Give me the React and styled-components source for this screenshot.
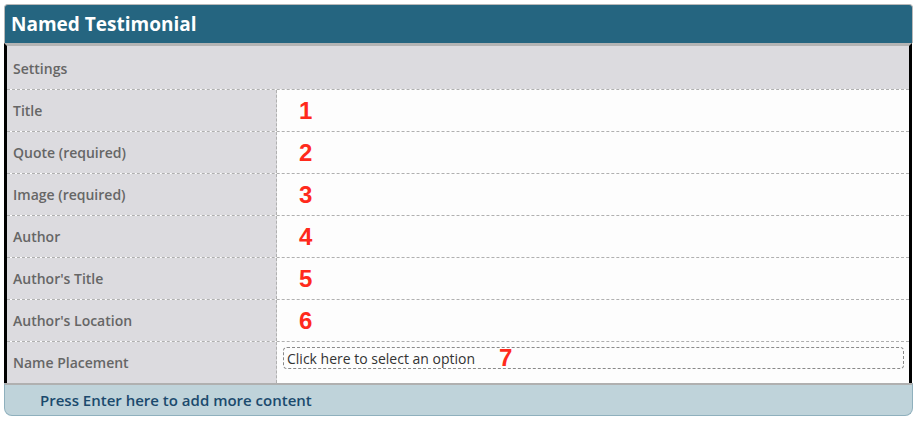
import styled, { createGlobalStyle } from "styled-components";

const GlobalStyle = createGlobalStyle`
  body {
    margin: 0;
    background: #ffffff;
    font-family: "Open Sans", "DejaVu Sans", sans-serif;
  }
`;

const Wrapper = styled.div`
  margin: 4px 0 0 4px;
  width: 909px;
`;

const Header = styled.div`
  height: 39px;
  box-sizing: border-box;
  background-color: #256580;
  border: 1px solid #b9b9b9;
  border-bottom: none;
  border-radius: 4px 4px 0 0;
  display: flex;
  align-items: center;
  padding-left: 6px;
  color: #ffffff;
  font-size: 19px;
  font-weight: 700;
`;

const Body = styled.div`
  border-top: 3px solid #b4b4b4;
  border-left: 3px solid #000;
  border-right: 3px solid #000;
  margin-right: 1px;
`;

const SettingsRow = styled.div`
  height: 43px;
  background-color: #dcdbdf;
  display: flex;
  align-items: center;
  padding: 2px 0 0 6px;
  box-sizing: border-box;
  color: #666;
  font-size: 14px;
  font-weight: 600;
`;

const Row = styled.div`
  height: 42px;
  box-sizing: border-box;
  border-top: 1px dashed #b0b0b0;
  display: grid;
  grid-template-columns: 270px 1fr;
`;

const Label = styled.div`
  background-color: #dcdbdf;
  border-right: 1px dashed #b0b0b0;
  display: flex;
  align-items: center;
  padding-left: 6px;
  color: #666;
  font-size: 14px;
  font-weight: 600;
`;

const Value = styled.div`
  background-color: #fdfdfd;
  display: flex;
  align-items: ${(p) => (p.top ? "flex-start" : "center")};
  padding: ${(p) => (p.top ? "5px" : "0")} 5px 0 6px;
`;

const Marker = styled.span`
  font-family: "Liberation Sans", Arial, sans-serif;
  font-weight: 700;
  font-size: 24px;
  color: #ff2a1c;
  margin-left: ${(p) => p.offset || 0}px;
  line-height: 1;
`;

const Select = styled.div`
  flex: 1;
  height: 22px;
  box-sizing: border-box;
  border: 1px dashed #8a8a8a;
  border-radius: 4px;
  display: flex;
  align-items: center;
  padding-left: 3px;
  color: #333;
  font-size: 14px;
`;

const Footer = styled.div`
  border-top: 2px solid #b0b0b0;
  height: 33px;
  box-sizing: border-box;
  background-color: #bfd3da;
  border-left: 1px solid #8fb0bd;
  border-right: 1px solid #8fb0bd;
  border-bottom: 1px solid #8fb0bd;
  border-radius: 0 0 8px 8px;
  display: flex;
  align-items: center;
  padding-left: 35px;
  color: #1b4a6d;
  font-size: 15px;
  font-weight: 600;
`;

const fields = [
  "Title",
  "Quote (required)",
  "Image (required)",
  "Author",
  "Author's Title",
  "Author's Location",
];

export default function App() {
  return (
    <>
      <GlobalStyle />
      <Wrapper>
        <Header>Named Testimonial</Header>
        <Body>
          <SettingsRow>Settings</SettingsRow>
          {fields.map((label, i) => (
            <Row key={label}>
              <Label>{label}</Label>
              <Value>
                <Marker offset={16}>{i + 1}</Marker>
              </Value>
            </Row>
          ))}
          <Row>
            <Label>Name Placement</Label>
            <Value top>
              <Select>
                Click here to select an option
                <Marker offset={24}>7</Marker>
              </Select>
            </Value>
          </Row>
        </Body>
        <Footer>Press Enter here to add more content</Footer>
      </Wrapper>
    </>
  );
}
